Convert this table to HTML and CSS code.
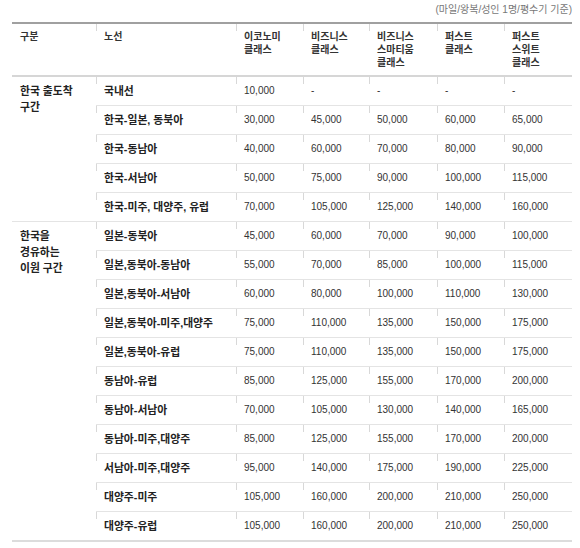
FILE: index.html
```html
<!DOCTYPE html>
<html lang="ko">
<head>
<meta charset="utf-8">
<title>마일리지 공제표</title>
<link rel="stylesheet" href="styles.css">
</head>
<body>
<div class="wrap">
  <p class="note">(마일/왕복/성인 1명/평수기 기준)</p>
  <table class="miles">
    <colgroup>
      <col class="c-sec"><col class="c-route"><col class="c-eco"><col class="c-biz"><col class="c-bizs"><col class="c-first"><col class="c-firsts">
    </colgroup>
    <thead>
      <tr>
        <th class="sec">구분</th>
        <th>노선</th>
        <th>이코노미<br>클래스</th>
        <th>비즈니스<br>클래스</th>
        <th>비즈니스<br>스마티움<br>클래스</th>
        <th>퍼스트<br>클래스</th>
        <th>퍼스트<br>스위트<br>클래스</th>
      </tr>
    </thead>
    <tbody>
      <tr><td class="sec" rowspan="5">한국 출도착<br>구간</td><td class="route">국내선</td><td>10,000</td><td>-</td><td>-</td><td>-</td><td>-</td></tr>
      <tr><td class="route">한국-일본, 동북아</td><td>30,000</td><td>45,000</td><td>50,000</td><td>60,000</td><td>65,000</td></tr>
      <tr><td class="route">한국-동남아</td><td>40,000</td><td>60,000</td><td>70,000</td><td>80,000</td><td>90,000</td></tr>
      <tr><td class="route">한국-서남아</td><td>50,000</td><td>75,000</td><td>90,000</td><td>100,000</td><td>115,000</td></tr>
      <tr><td class="route">한국-미주, 대양주, 유럽</td><td>70,000</td><td>105,000</td><td>125,000</td><td>140,000</td><td>160,000</td></tr>
      <tr><td class="sec" rowspan="11">한국을<br>경유하는<br>이원 구간</td><td class="route">일본-동북아</td><td>45,000</td><td>60,000</td><td>70,000</td><td>90,000</td><td>100,000</td></tr>
      <tr><td class="route">일본,동북아-동남아</td><td>55,000</td><td>70,000</td><td>85,000</td><td>100,000</td><td>115,000</td></tr>
      <tr><td class="route">일본,동북아-서남아</td><td>60,000</td><td>80,000</td><td>100,000</td><td>110,000</td><td>130,000</td></tr>
      <tr><td class="route">일본,동북아-미주,대양주</td><td>75,000</td><td>110,000</td><td>135,000</td><td>150,000</td><td>175,000</td></tr>
      <tr><td class="route">일본,동북아-유럽</td><td>75,000</td><td>110,000</td><td>135,000</td><td>150,000</td><td>175,000</td></tr>
      <tr><td class="route">동남아-유럽</td><td>85,000</td><td>125,000</td><td>155,000</td><td>170,000</td><td>200,000</td></tr>
      <tr><td class="route">동남아-서남아</td><td>70,000</td><td>105,000</td><td>130,000</td><td>140,000</td><td>165,000</td></tr>
      <tr><td class="route">동남아-미주,대양주</td><td>85,000</td><td>125,000</td><td>155,000</td><td>170,000</td><td>200,000</td></tr>
      <tr><td class="route">서남아-미주,대양주</td><td>95,000</td><td>140,000</td><td>175,000</td><td>190,000</td><td>225,000</td></tr>
      <tr><td class="route">대양주-미주</td><td>105,000</td><td>160,000</td><td>200,000</td><td>210,000</td><td>250,000</td></tr>
      <tr><td class="route">대양주-유럽</td><td>105,000</td><td>160,000</td><td>200,000</td><td>210,000</td><td>250,000</td></tr>
    </tbody>
  </table>
</div>
</body>
</html>
```
FILE: styles.css
```css
html, body {
  margin: 0;
  padding: 0;
  background: #fff;
}

body {
  font-family: "Liberation Sans", "Noto Sans CJK KR", sans-serif;
  font-size: 10px;
  color: #333;
}

.wrap {
  width: 560px;
  margin-left: 12px;
  padding-top: 4px;
}

.note {
  margin: 0;
  height: 18px;
  line-height: 12px;
  text-align: right;
  color: #777;
}

.miles {
  width: 560px;
  table-layout: fixed;
  border-collapse: collapse;
  border-top: 2px solid #a0a0a0;
  border-bottom: 2px solid #dcdcdc;
}

.c-sec { width: 84px; }
.c-route { width: 140px; }
.c-eco { width: 67px; }
.c-biz { width: 66px; }
.c-bizs { width: 68px; }
.c-first { width: 67px; }
.c-firsts { width: 68px; }

.miles th,
.miles td {
  padding: 0 8px;
  text-align: left;
  background: linear-gradient(#d8d8d8, #d8d8d8) no-repeat left top / 1px 7px;
}

.miles th {
  vertical-align: top;
  padding-top: 6px;
  padding-bottom: 6px;
  line-height: 13px;
  font-weight: bold;
  color: #333;
  border-bottom: 2px solid #d6d6d6;
}

.miles td {
  height: 28px;
  padding-top: 0;
  padding-bottom: 0;
  line-height: 14px;
  vertical-align: middle;
  color: #333;
  border-bottom: 1px solid #e4e4e4;
}

.miles th.sec,
.miles td.sec {
  background: none;
}

.miles td.sec {
  vertical-align: top;
  padding-top: 6px;
  line-height: 16px;
  font-size: 10.8px;
  font-weight: bold;
  color: #222;
}

.miles td.route {
  font-size: 10.8px;
  font-weight: bold;
  color: #222;
}
```
